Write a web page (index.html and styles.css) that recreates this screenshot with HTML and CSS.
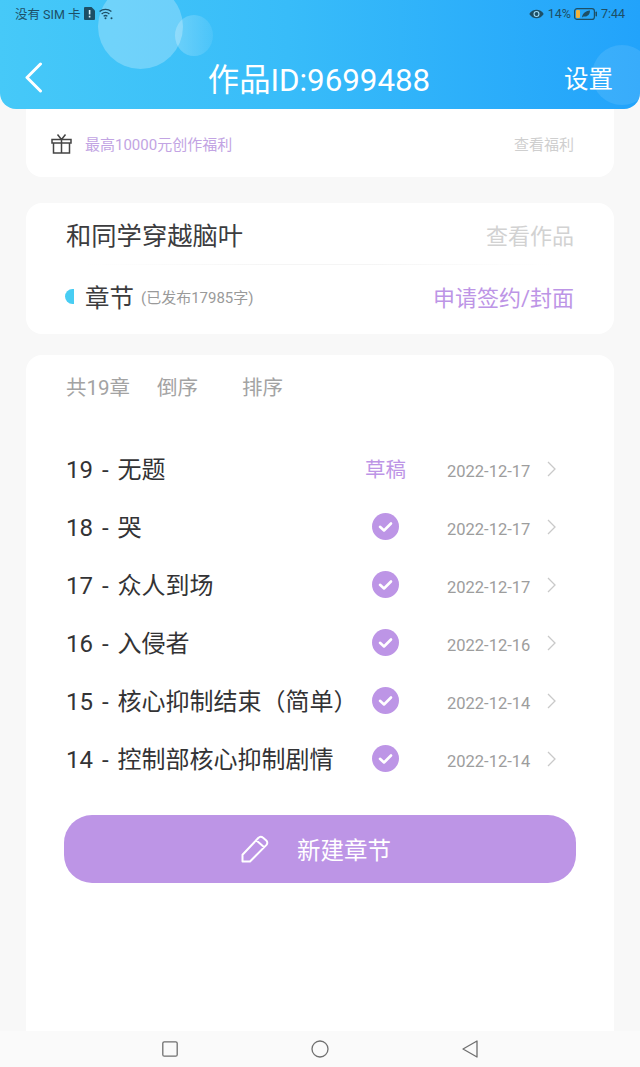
FILE: index.html
```html
<!DOCTYPE html>
<html lang="zh">
  <head>
    <meta name="viewport" content="width=device-width, initial-scale=1.0">
    <title>作品ID:9699488</title>
    <link rel="stylesheet" href="styles.css">
  </head>
  <body>
    <div class="page">
      <!-- Blue header with status bar -->
      <header class="header">
        <div class="bubble bubble-big"></div>
        <div class="bubble bubble-small"></div>
        <div class="bubble bubble-right"></div>
        <div class="status-bar">
          <div class="status-side">
            <span>没有 SIM 卡</span>
            <svg class="sim-icon" width="11" height="13" viewBox="0 0 11 13"><path d="M1 0h6.5L11 3.5V12a1 1 0 0 1-1 1H1a1 1 0 0 1-1-1V1a1 1 0 0 1 1-1z" fill="#1d4f66"/><path d="M4.8 3h1.6v4.6H4.8zM4.8 8.8h1.6v1.6H4.8z" fill="#d8f2fd"/></svg>
            <svg class="wifi-icon" width="14" height="12" viewBox="0 0 14 12" fill="none" stroke="#1d4f66" stroke-width="1.3"><path d="M.6 3.6C4 .6 9 .6 12.4 3.6M2.6 6C5 4 8 4 10.400 6M4.600 8.200C5.800 7.300 7.200 7.300 8.400 8.200"/><circle cx="6.500" cy="10.300" r="1" fill="#1d4f66" stroke="none"/><circle cx="12.500" cy="10.300" r="1" fill="#1d4f66" stroke="none"/></svg>
          </div>
          <div class="status-side">
            <svg width="15" height="10" viewBox="0 0 15 10"><path d="M.3 5C3.500-.6 11.500-.6 14.700 5 11.500 10.600 3.500 10.600.3 5z" fill="#1d4f66"/><circle cx="7.500" cy="5" r="3" fill="#9fdcf8"/><circle cx="7.500" cy="5" r="1.900" fill="#1d4f66"/></svg>
            <span class="battery-pct">14%</span>
            <svg width="23" height="12" viewBox="0 0 23 12"><rect x=".6" y=".6" width="19.800" height="10.800" rx="2.500" fill="none" stroke="#1d4f66" stroke-width="1.200"/><rect x="2" y="2" width="4" height="8" rx="1" fill="#f2b33d"/><path d="M8 9.500C8.500 5.500 11 3 16 2.500 16 6.500 13.500 9 9.500 8.500z" fill="#1d4f66"/><rect x="21.500" y="3.500" width="1.500" height="5" rx=".7" fill="#1d4f66"/></svg>
            <span>7:44</span>
          </div>
        </div>
        <div class="title-bar">
          <div class="title-side">
            <svg class="back-icon" width="18" height="31" viewBox="0 0 18 31" fill="none" stroke="#fff" stroke-width="3" stroke-linecap="round" stroke-linejoin="round"><path d="M15.500 2 2 15.500 15.500 29"/></svg>
          </div>
          <h1 class="title">作品ID:9699488</h1>
          <div class="title-side settings">设置</div>
        </div>
      </header>

      <main class="content">
        <section class="card card-welfare">
          <svg class="gift-icon" width="21" height="21" viewBox="0 0 21 21" fill="none" stroke="#444" stroke-width="1.500"><path d="M1 6.500h19v3.500H1zM2.500 10v10h16V10M10.500 6.500V20M10.500 6.500 6.500 1.500M10.500 6.500l4-5"/></svg>
          <span class="welfare-text">最高10000元创作福利</span>
          <span class="welfare-link">查看福利</span>
        </section>

        <section class="card card-work">
          <div class="work-row">
            <span class="work-name">和同学穿越脑叶</span>
            <span class="work-link">查看作品</span>
          </div>
          <div class="divider"></div>
          <div class="chapter-head">
            <span class="half-dot"></span>
            <span class="chapter-label">章节</span>
            <span class="chapter-count">(已发布17985字)</span>
            <span class="apply-link">申请签约/封面</span>
          </div>
        </section>

        <section class="card card-list">
          <div class="list-tools">
            <span class="tool-total">共19章</span>
            <span class="tool-desc">倒序</span>
            <span>排序</span>
          </div>

          <ul class="chapters">
            <li class="chapter">
              <span class="chapter-name">19 - 无题</span>
              <span class="chapter-state draft">草稿</span>
              <span class="chapter-date">2022-12-17</span>
              <svg class="chevron" width="9" height="16" viewBox="0 0 9 16" fill="none" stroke="#c9c9c9" stroke-width="1.300"><path d="m1 1 7 7-7 7"/></svg>
            </li>
            <li class="chapter">
              <span class="chapter-name">18 - 哭</span>
              <span class="chapter-state"><svg width="27" height="27" viewBox="0 0 27 27"><circle cx="13.500" cy="13.500" r="13.500" fill="#bd95e6"/><path d="m8 13.800 4 3.700 7-7" fill="none" stroke="#fff" stroke-width="2.600" stroke-linecap="round" stroke-linejoin="round"/></svg></span>
              <span class="chapter-date">2022-12-17</span>
              <svg class="chevron" width="9" height="16" viewBox="0 0 9 16" fill="none" stroke="#c9c9c9" stroke-width="1.300"><path d="m1 1 7 7-7 7"/></svg>
            </li>
            <li class="chapter">
              <span class="chapter-name">17 - 众人到场</span>
              <span class="chapter-state"><svg width="27" height="27" viewBox="0 0 27 27"><circle cx="13.500" cy="13.500" r="13.500" fill="#bd95e6"/><path d="m8 13.800 4 3.700 7-7" fill="none" stroke="#fff" stroke-width="2.600" stroke-linecap="round" stroke-linejoin="round"/></svg></span>
              <span class="chapter-date">2022-12-17</span>
              <svg class="chevron" width="9" height="16" viewBox="0 0 9 16" fill="none" stroke="#c9c9c9" stroke-width="1.300"><path d="m1 1 7 7-7 7"/></svg>
            </li>
            <li class="chapter">
              <span class="chapter-name">16 - 入侵者</span>
              <span class="chapter-state"><svg width="27" height="27" viewBox="0 0 27 27"><circle cx="13.500" cy="13.500" r="13.500" fill="#bd95e6"/><path d="m8 13.800 4 3.700 7-7" fill="none" stroke="#fff" stroke-width="2.600" stroke-linecap="round" stroke-linejoin="round"/></svg></span>
              <span class="chapter-date">2022-12-16</span>
              <svg class="chevron" width="9" height="16" viewBox="0 0 9 16" fill="none" stroke="#c9c9c9" stroke-width="1.300"><path d="m1 1 7 7-7 7"/></svg>
            </li>
            <li class="chapter">
              <span class="chapter-name">15 - 核心抑制结束（简单）</span>
              <span class="chapter-state"><svg width="27" height="27" viewBox="0 0 27 27"><circle cx="13.500" cy="13.500" r="13.500" fill="#bd95e6"/><path d="m8 13.800 4 3.700 7-7" fill="none" stroke="#fff" stroke-width="2.600" stroke-linecap="round" stroke-linejoin="round"/></svg></span>
              <span class="chapter-date">2022-12-14</span>
              <svg class="chevron" width="9" height="16" viewBox="0 0 9 16" fill="none" stroke="#c9c9c9" stroke-width="1.300"><path d="m1 1 7 7-7 7"/></svg>
            </li>
            <li class="chapter">
              <span class="chapter-name">14 - 控制部核心抑制剧情</span>
              <span class="chapter-state"><svg width="27" height="27" viewBox="0 0 27 27"><circle cx="13.500" cy="13.500" r="13.500" fill="#bd95e6"/><path d="m8 13.800 4 3.700 7-7" fill="none" stroke="#fff" stroke-width="2.600" stroke-linecap="round" stroke-linejoin="round"/></svg></span>
              <span class="chapter-date">2022-12-14</span>
              <svg class="chevron" width="9" height="16" viewBox="0 0 9 16" fill="none" stroke="#c9c9c9" stroke-width="1.300"><path d="m1 1 7 7-7 7"/></svg>
            </li>
          </ul>

          <button class="new-chapter">
            <svg width="28" height="28" viewBox="0 0 28 28" fill="none" stroke="#fff" stroke-width="2" stroke-linejoin="round"><path d="M1.500 26.500v-6.800L17.500 2.800a3 3 0 0 1 4.300-.2l3.500 3a3 3 0 0 1 .2 4.300L9 26.500zM15.500 5.500l8 7"/></svg>
            <span>新建章节</span>
          </button>
        </section>
      </main>

      <!-- Android navigation bar -->
      <nav class="nav-bar">
        <svg width="16" height="16" viewBox="0 0 16 16" fill="none" stroke="#6f6f6f" stroke-width="1.300"><rect x=".8" y=".8" width="14.400" height="14.400" rx="1.500"/></svg>
        <svg width="18" height="18" viewBox="0 0 18 18" fill="none" stroke="#6f6f6f" stroke-width="1.300"><circle cx="9" cy="9" r="8"/></svg>
        <svg width="16" height="18" viewBox="0 0 16 18" fill="none" stroke="#6f6f6f" stroke-width="1.300" stroke-linejoin="round"><path d="M15 1v16L1 9z"/></svg>
      </nav>
    </div>
  </body>
</html>
```

FILE: styles.css
```css
* {
  box-sizing: border-box;
}

body {
  margin: 0;
  background: #f8f8f8;
  font-family: Roboto, "Noto Sans CJK SC", sans-serif;
}

.page {
  display: flex;
  flex-direction: column;
  width: 640px;
  height: 1067px;
  overflow: hidden;
}

/* Header */
.header {
  position: relative;
  flex: none;
  height: 109px;
  overflow: hidden;
  border-radius: 0 0 16px 16px;
  background: linear-gradient(90deg, #46c9f8 0%, #38bcf9 45%, #22a3fb 100%);
}

.bubble {
  position: absolute;
  border-radius: 50%;
}

.bubble-big {
  left: 98px;
  top: -16px;
  width: 85px;
  height: 85px;
  background: rgba(255, 255, 255, 0.25);
}

.bubble-small {
  left: 175px;
  top: 15px;
  width: 38px;
  height: 41px;
  background: linear-gradient(90deg, rgba(255, 255, 255, 0.24), rgba(255, 255, 255, 0.08));
}

.bubble-right {
  left: 592px;
  top: 45px;
  width: 60px;
  height: 60px;
  background: rgba(255, 255, 255, 0.1);
}

.status-bar {
  position: relative;
  display: flex;
  justify-content: space-between;
  align-items: center;
  height: 27px;
  padding: 0 15px;
  font-size: 12.500px;
  color: #1d4f66;
}

.status-side {
  display: flex;
  align-items: center;
  gap: 4px;
}

.battery-pct {
  margin-right: -1px;
}

.title-bar {
  position: relative;
  display: flex;
  justify-content: space-between;
  align-items: center;
  height: 50px;
  margin-top: 25px;
  padding: 0 27px 0 25px;
  color: #fff;
}

.title-side {
  display: flex;
  flex: 1;
}

.title {
  margin: 0;
  font-size: 31.300px;
  font-weight: 400;
}

.settings {
  justify-content: flex-end;
  font-size: 24.500px;
}

/* Cards */
.content {
  display: flex;
  flex-direction: column;
  flex: 1;
  min-height: 0;
  padding: 0 26px;
}

.card {
  background: #fff;
  border-radius: 16px;
}

.card-welfare {
  display: flex;
  align-items: center;
  height: 68px;
  padding: 0 40px 0 25px;
  border-radius: 0 0 16px 16px;
  font-size: 15px;
}

.gift-icon {
  margin-right: 13px;
}

.welfare-text {
  flex: 1;
  color: #c2a4e3;
}

.welfare-link {
  color: #cfcfcf;
}

.card-work {
  height: 131px;
  margin-top: 26px;
  padding: 0 40px;
}

.work-row {
  display: flex;
  justify-content: space-between;
  align-items: center;
  height: 61px;
}

.work-name {
  font-size: 25.300px;
  color: #3c3c3e;
}

.work-link {
  font-size: 22px;
  color: #d2d2d2;
}

.divider {
  height: 1px;
  margin: 0 20px;
  background: linear-gradient(90deg, #fff, #f5f5f5 40%, #f5f5f5 60%, #fff);
}

.chapter-head {
  display: flex;
  align-items: center;
  height: 62px;
  margin-left: -1px;
}

.half-dot {
  width: 9px;
  height: 15px;
  margin-right: 11px;
  border-radius: 9px 0 0 9px;
  background: #48cdf3;
}

.chapter-label {
  font-size: 24.500px;
  color: #3c3c3e;
}

.chapter-count {
  flex: 1;
  margin: 0 0 0 7px;
  font-size: 15px;
  color: #9a9a9a;
}

.apply-link {
  font-size: 22px;
  color: #bd95e6;
}

.card-list {
  flex: 1;
  min-height: 0;
  margin-top: 21px;
  padding: 0 38px;
  border-radius: 16px 16px 0 0;
}

.list-tools {
  display: flex;
  align-items: center;
  height: 62px;
  padding-left: 2px;
  font-size: 20.500px;
  color: #a3a3a3;
}

.tool-total {
  margin-right: 27px;
}

.tool-desc {
  margin-right: 44px;
}

.chapters {
  margin: 22px 0 0;
  padding: 0 0 0 2px;
  list-style: none;
}

.chapter {
  display: flex;
  align-items: center;
  height: 58px;
}

.chapter-name {
  width: 293px;
  padding-bottom: 2px;
  font-size: 24px;
  word-spacing: 3px;
  color: #333335;
  white-space: nowrap;
}

.chapter-state {
  display: flex;
  justify-content: center;
  width: 53px;
}

.draft {
  font-size: 20.500px;
  color: #bd95e6;
}

.chapter-date {
  width: 100px;
  margin-left: 35px;
  padding-top: 6px;
  font-size: 16.500px;
  color: #9d9d9d;
}

.chevron {
  margin-top: 2px;
}

.new-chapter {
  display: flex;
  justify-content: center;
  align-items: center;
  gap: 28px;
  width: 512px;
  height: 68px;
  margin: 28px 0 0;
  padding: 0 8px 0 0;
  border: none;
  border-radius: 28px;
  background: #bd95e6;
  color: #fff;
  font-family: inherit;
  font-size: 23.500px;
}

/* Bottom navigation */
.nav-bar {
  flex: none;
  display: flex;
  justify-content: center;
  align-items: center;
  gap: 133px;
  height: 36px;
  background: #fafafa;
}
```
